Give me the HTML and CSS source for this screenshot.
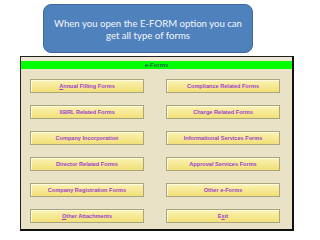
FILE: index.html
```html
<!DOCTYPE html>
<html>
<head>
<meta charset="utf-8">
<link rel="stylesheet" href="styles.css">
</head>
<body>
<div class="callout">When you open the E-FORM option you can<br>get all type of forms</div>
<div class="panel">
  <div class="strip"></div>
  <div class="header">e-Forms</div>
  <div class="grid">
    <div class="btn"><u>A</u>nnual Filling Forms</div>
    <div class="btn">Compliance Related Forms</div>
    <div class="btn">XBRL Related Forms</div>
    <div class="btn">Charge Related Forms</div>
    <div class="btn">Company Incorporation</div>
    <div class="btn">Informational Services Forms</div>
    <div class="btn">Director Related Forms</div>
    <div class="btn">Approval Services Forms</div>
    <div class="btn">Company Registration Forms</div>
    <div class="btn">Other e-Forms</div>
    <div class="btn"><u>O</u>ther Attachments</div>
    <div class="btn">E<u>x</u>it</div>
  </div>
</div>
</body>
</html>
```
FILE: styles.css
```css
html, body {
  margin: 0;
  padding: 0;
  background: #ffffff;
}
body {
  width: 320px;
  height: 240px;
  overflow: hidden;
  padding-top: 4px;
  box-sizing: border-box;
}
.callout {
  margin-left: 43px;
  width: 210px;
  height: 49px;
  box-sizing: border-box;
  background: #4f81bd;
  border: 1px solid #41699a;
  border-radius: 8px;
  color: #f4f7fb;
  font-family: Lato, "Open Sans", sans-serif;
  font-size: 9.6px;
  line-height: 12px;
  text-align: center;
  display: flex;
  align-items: center;
  justify-content: center;
  padding-top: 2px;
}
.panel {
  margin-top: 3px;
  margin-left: 20px;
  width: 274px;
  height: 175px;
  box-sizing: border-box;
  background: #e9e2c6;
  border-top: 1px solid #222;
  border-left: 1px solid #222;
  border-right: 2px solid #111;
  border-bottom: 2px solid #111;
  display: flex;
  flex-direction: column;
}
.strip {
  height: 4px;
  background: #ece7d2;
}
.header {
  height: 8px;
  background: #00ff00;
  color: #1a6a4a;
  font-family: "Liberation Sans", sans-serif;
  font-weight: bold;
  font-size: 6px;
  line-height: 8px;
  text-align: center;
}
.grid {
  display: grid;
  grid-template-columns: 114px 114px;
  grid-auto-rows: 14px;
  column-gap: 22px;
  row-gap: 12px;
  padding-top: 10px;
  padding-left: 9px;
}
.btn {
  box-sizing: border-box;
  background: linear-gradient(#faf2b4, #f2e078);
  border: 1px solid #a8a67a;
  box-shadow: inset 1px 1px 0 #fffbe0;
  color: #a040cc;
  font-family: "Liberation Sans", sans-serif;
  font-weight: bold;
  font-size: 5.6px;
  display: flex;
  align-items: center;
  justify-content: center;
  white-space: nowrap;
}
.btn u {
  text-decoration: underline;
}
```
